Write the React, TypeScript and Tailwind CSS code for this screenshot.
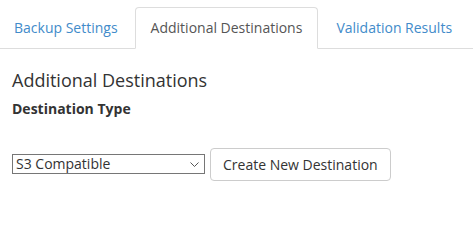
import React from "react";

export default function App() {
  return (
    <div className="w-[473px] h-[200px] bg-white text-[#333] text-[14px] leading-[20px] overflow-hidden" style={{ fontFamily: '"Open Sans", sans-serif' }}>
      <ul className="flex border-b border-[#ddd] pt-[7px]">
        <li className="-mb-px mr-[2px]">
          <a className="block pl-[13px] pr-[14px] py-[10px] border border-transparent text-[#428bca] rounded-t-[4px]">Backup Settings</a>
        </li>
        <li className="-mb-px mr-[2px]">
          <a className="block px-[15px] py-[10px] border border-[#ddd] border-b-white bg-white text-[#555] rounded-t-[4px]">Additional Destinations</a>
        </li>
        <li className="-mb-px">
          <a className="block px-[15px] py-[10px] border border-transparent text-[#428bca] rounded-t-[4px]">Validation Results</a>
        </li>
      </ul>
      <div className="px-[12px]">
        <h3 className="mt-[21px] text-[18px] leading-[20px] font-normal">Additional Destinations</h3>
        <div className="mt-[9px] font-bold">Destination Type</div>
        <div className="mt-[29px] flex items-center gap-[5px]">
          <div className="relative -mt-[2px]">
            <select className="block appearance-none w-[193px] h-[20px] border border-[#767676] bg-white pl-[3px] text-[14px] leading-[18px] text-[#333] outline-none" defaultValue="s3">
              <option value="s3">S3 Compatible</option>
            </select>
            <svg className="absolute right-[6px] top-[8px] pointer-events-none" width="9" height="5" viewBox="0 0 9 5" fill="none">
              <path d="M0.5 0.5 L4.5 4.5 L8.5 0.5" stroke="#555" strokeWidth="1" />
            </svg>
          </div>
          <button className="h-[33px] px-[12px] border border-[#ccc] rounded-[4px] bg-white text-[#333] text-[14px]">Create New Destination</button>
        </div>
      </div>
    </div>
  );
}
